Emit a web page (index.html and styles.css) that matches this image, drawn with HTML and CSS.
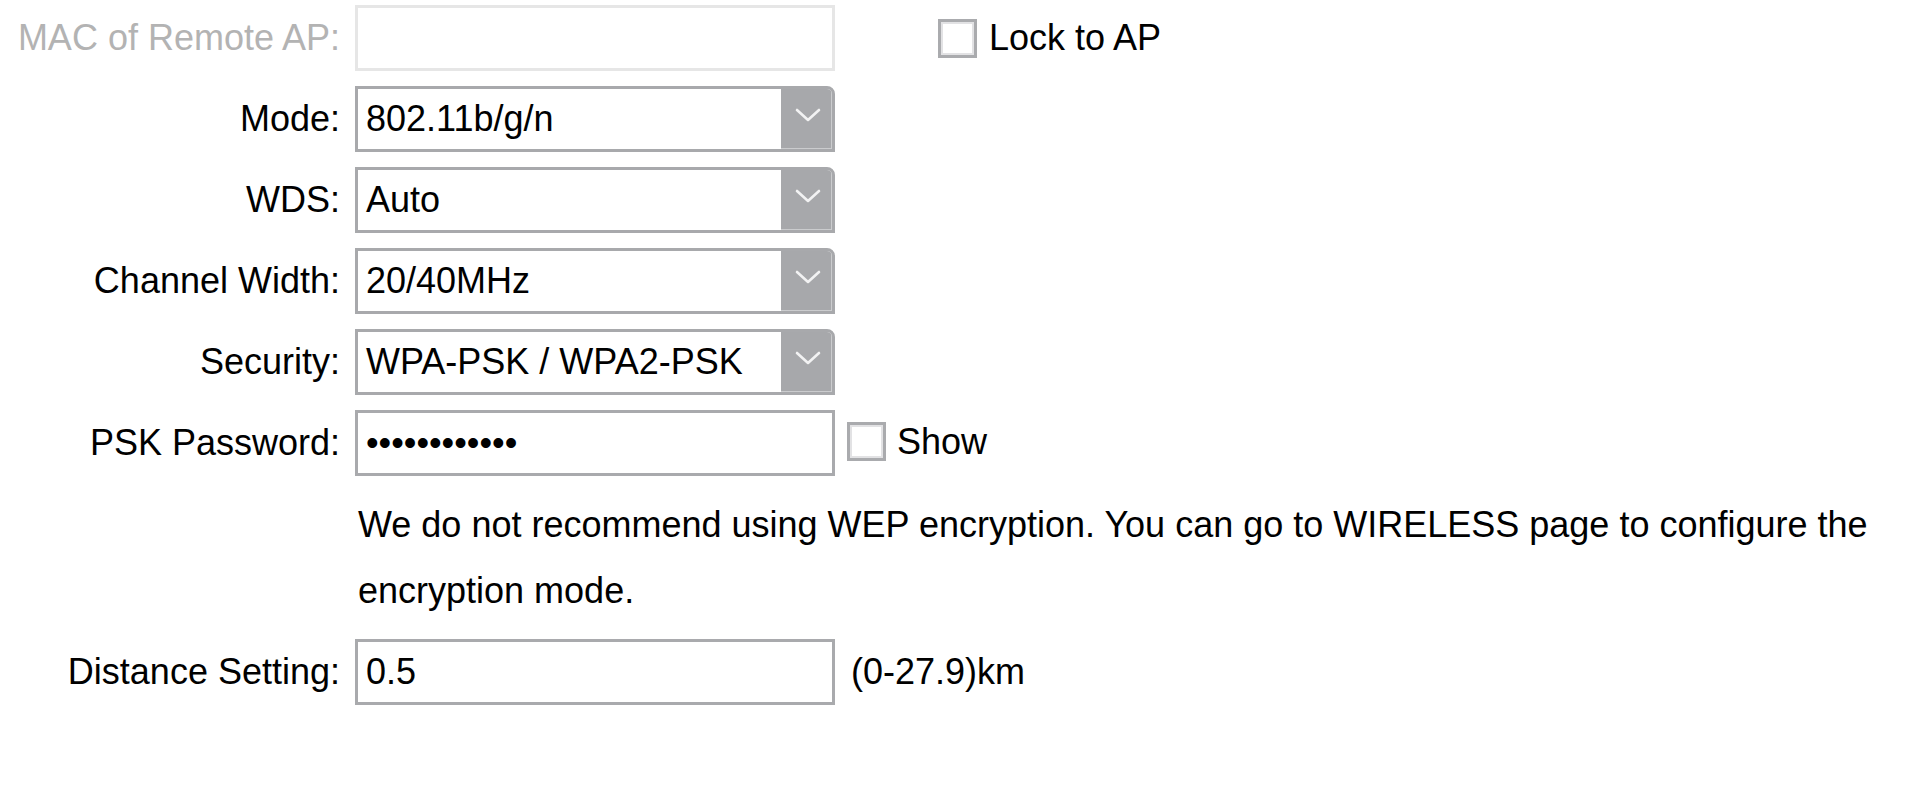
FILE: index.html
```html
<!DOCTYPE html>
<html lang="en">
<head>
<meta charset="utf-8">
<title>Wireless Settings</title>
<link rel="stylesheet" href="styles.css">
</head>
<body>
<div class="form">
  <div class="row">
    <label class="label disabled">MAC of Remote AP:</label>
    <div class="field">
      <div class="input input-disabled"></div>
      <span class="check lock"><span class="box"></span><span class="check-text">Lock to AP</span></span>
    </div>
  </div>
  <div class="row">
    <label class="label">Mode:</label>
    <div class="field">
      <div class="select"><span class="value">802.11b/g/n</span><span class="arrow"><svg width="26" height="14" viewBox="0 0 26 14"><polyline points="2,2 13,12 24,2" fill="none" stroke="#fff" stroke-width="2.6" stroke-linecap="round" stroke-linejoin="round" opacity="0.85"/></svg></span></div>
    </div>
  </div>
  <div class="row">
    <label class="label">WDS:</label>
    <div class="field">
      <div class="select"><span class="value">Auto</span><span class="arrow"><svg width="26" height="14" viewBox="0 0 26 14"><polyline points="2,2 13,12 24,2" fill="none" stroke="#fff" stroke-width="2.6" stroke-linecap="round" stroke-linejoin="round" opacity="0.85"/></svg></span></div>
    </div>
  </div>
  <div class="row">
    <label class="label">Channel Width:</label>
    <div class="field">
      <div class="select"><span class="value">20/40MHz</span><span class="arrow"><svg width="26" height="14" viewBox="0 0 26 14"><polyline points="2,2 13,12 24,2" fill="none" stroke="#fff" stroke-width="2.6" stroke-linecap="round" stroke-linejoin="round" opacity="0.85"/></svg></span></div>
    </div>
  </div>
  <div class="row">
    <label class="label">Security:</label>
    <div class="field">
      <div class="select"><span class="value">WPA-PSK / WPA2-PSK</span><span class="arrow"><svg width="26" height="14" viewBox="0 0 26 14"><polyline points="2,2 13,12 24,2" fill="none" stroke="#fff" stroke-width="2.6" stroke-linecap="round" stroke-linejoin="round" opacity="0.85"/></svg></span></div>
    </div>
  </div>
  <div class="row row-psk">
    <label class="label">PSK Password:</label>
    <div class="field">
      <div class="input"><span class="value">••••••••••••</span></div>
      <span class="check show"><span class="box"></span><span class="check-text">Show</span></span>
    </div>
  </div>
  <p class="note">We do not recommend using WEP encryption. You can go to WIRELESS page to configure the encryption mode.</p>
  <div class="row">
    <label class="label">Distance Setting:</label>
    <div class="field">
      <div class="input"><span class="value">0.5</span></div>
      <span class="unit">(0-27.9)km</span>
    </div>
  </div>
</div>
</body>
</html>
```
FILE: styles.css
```css
html, body {
  margin: 0;
  padding: 0;
  background: #ffffff;
}
body {
  font-family: "Liberation Sans", Arial, sans-serif;
  font-size: 36px;
  color: #000000;
}
.form {
  padding-top: 5px;
}
.row {
  display: flex;
  align-items: center;
  margin-bottom: 15px;
}
.row-psk {
  margin-top: 6px;
  margin-bottom: 0;
}
.label {
  flex: none;
  width: 340px;
  margin-right: 15px;
  text-align: right;
  white-space: nowrap;
}
.label.disabled {
  color: #b3b3b3;
}
.field {
  display: flex;
  align-items: center;
}
.input {
  box-sizing: border-box;
  width: 480px;
  height: 66px;
  border: 3px solid #a9aaad;
  background: #fff;
  display: flex;
  align-items: center;
  padding-left: 8px;
}
.input-disabled {
  border-color: #e6e6e6;
}
.select {
  box-sizing: border-box;
  width: 480px;
  height: 66px;
  border: 3px solid #a8a9ac;
  border-top-right-radius: 8px;
  display: flex;
  align-items: stretch;
  background: #fff;
  overflow: hidden;
}
.select .value {
  flex: 1;
  display: flex;
  align-items: center;
  padding-left: 8px;
  white-space: nowrap;
}
.arrow {
  flex: none;
  width: 51px;
  background: #a7a8ab;
  box-shadow: inset -1px -1px 0 #cbccce;
  display: flex;
  align-items: center;
  justify-content: center;
}
.arrow svg {
  margin-bottom: 8px;
  margin-left: 2px;
  filter: blur(0.7px);
}
.check {
  display: flex;
  align-items: center;
}
.box {
  box-sizing: border-box;
  width: 39px;
  height: 39px;
  border: 3px solid #aaabae;
  box-shadow: inset 0 0 0 2px #e2e2e4;
  background: #fff;
}
.check-text {
  margin-left: 14px;
}
.lock {
  margin-left: 103px;
  margin-top: 0;
}
.lock .check-text {
  margin-left: 12px;
}
.show {
  margin-left: 12px;
  margin-top: -3px;
}
.show .check-text {
  margin-left: 11px;
}
.unit {
  margin-left: 16px;
}
.note {
  margin: 0 0 0 358px;
  padding-top: 16px;
  padding-bottom: 15px;
  line-height: 66px;
}
```
